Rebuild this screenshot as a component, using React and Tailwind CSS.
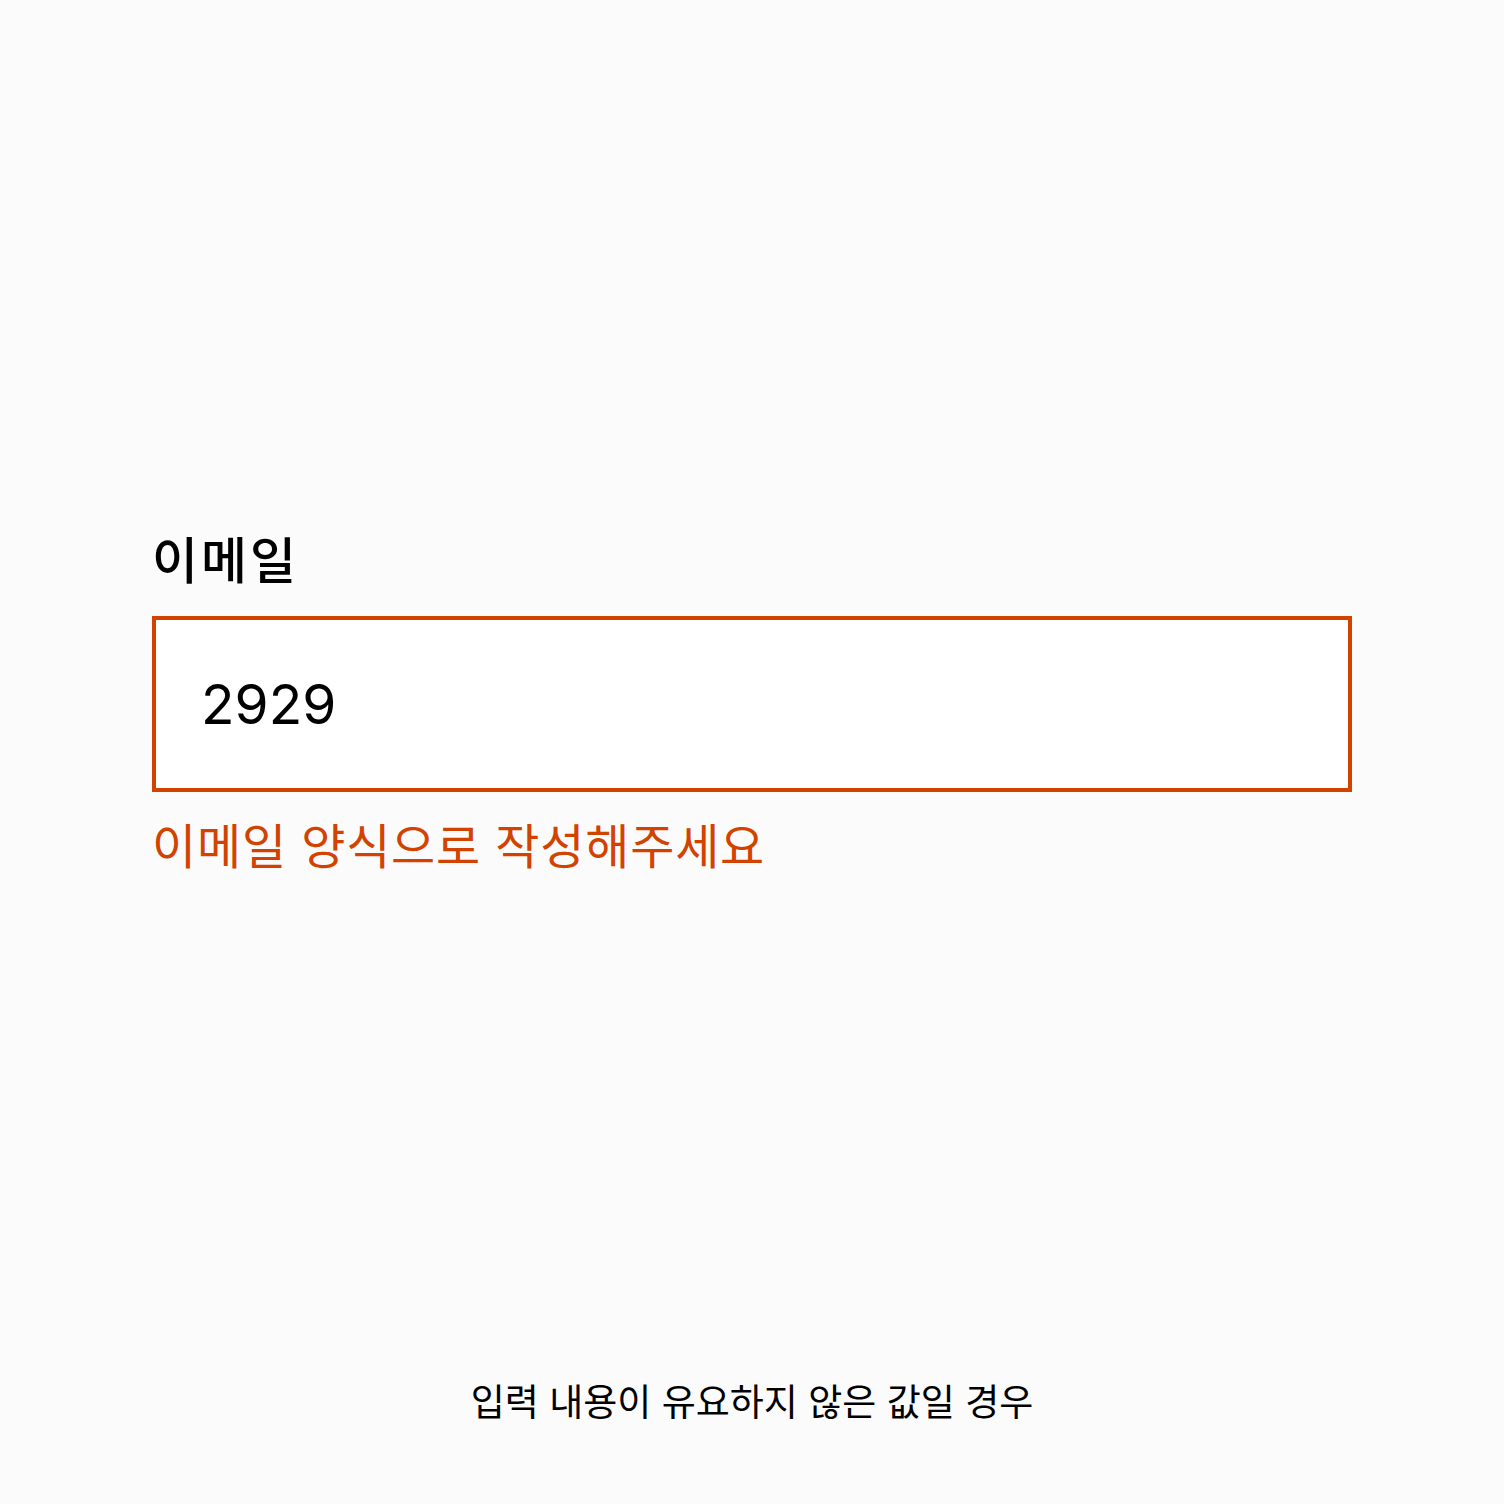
import React from 'react'

const App = () => {
  return (
    <div
      className="min-h-[1504px] w-[1504px] bg-[#fbfbfb] flex flex-col"
      style={{ fontFamily: '"Inter", "Noto Sans CJK KR", "Noto Sans", sans-serif' }}
    >
      {/* Field */}
      <div className="pt-[525px] px-[152px]">
        <label className="block text-[50px] leading-[72px] tracking-[3px] font-medium text-black">이메일</label>
        <div className="mt-[19px] h-[176px] border-4 border-[#d24200] bg-white flex items-center pl-[45px]">
          <span className="text-[55px] text-black">2929</span>
        </div>
        <p className="mt-[21px] text-[48px] leading-[68px] tracking-[0.8px] text-[#d24200]">이메일 양식으로 작성해주세요</p>
      </div>

      {/* Caption */}
      <div className="mt-auto pb-[74px] text-center text-[37px] text-black">입력 내용이 유요하지 않은 값일 경우</div>
    </div>
  )
}

export default App
